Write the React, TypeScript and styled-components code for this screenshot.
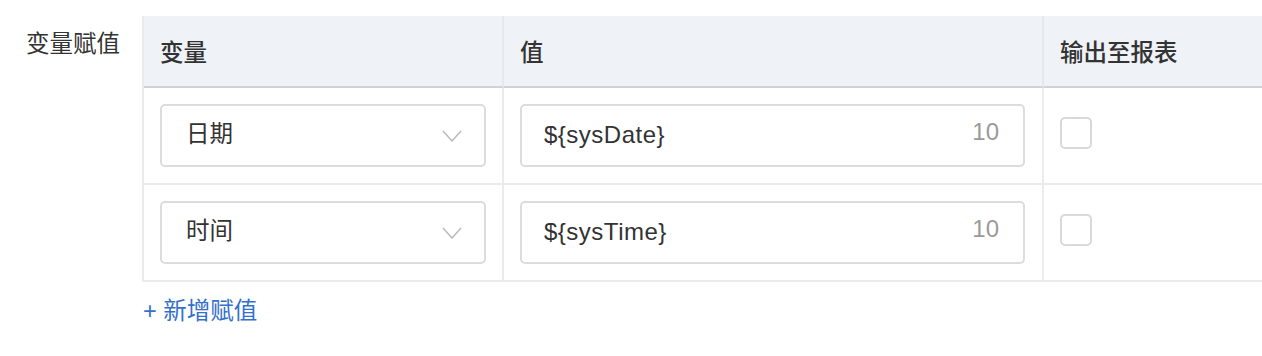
import React from "react";
import styled, { createGlobalStyle } from "styled-components";

const GlobalStyle = createGlobalStyle`
  html, body {
    margin: 0;
    background: #ffffff;
    overflow: hidden;
  }
  body {
    font-family: "Liberation Sans", "Noto Sans CJK SC", sans-serif;
    color: #333333;
  }
`;

type Row = { name: string; value: string; max: number };

const rows: Row[] = [
  { name: "日期", value: "${sysDate}", max: 10 },
  { name: "时间", value: "${sysTime}", max: 10 },
];

export default function App() {
  return (
    <>
      <GlobalStyle />
      <Page>
        <Label>变量赋值</Label>
        <Field>
          <Table>
            <HeadCell>变量</HeadCell>
            <HeadCell>值</HeadCell>
            <HeadCell $last>输出至报表</HeadCell>
            {rows.map((row) => (
              <React.Fragment key={row.name}>
                <Cell>
                  <Select>
                    <Text>{row.name}</Text>
                    <Chevron viewBox="0 0 20 12">
                      <path d="M1 1 L10 11 L19 1" />
                    </Chevron>
                  </Select>
                </Cell>
                <Cell>
                  <Input>
                    <Value>{row.value}</Value>
                    <Counter>{row.max}</Counter>
                  </Input>
                </Cell>
                <Cell $last>
                  <Checkbox />
                </Cell>
              </React.Fragment>
            ))}
          </Table>
          <AddLink>+ 新增赋值</AddLink>
        </Field>
      </Page>
    </>
  );
}

const Page = styled.div`
  display: flex;
  padding: 16px 0 0 26px;
`;

const Label = styled.div`
  width: 117px;
  flex-shrink: 0;
  padding-top: 13px;
  font-size: 23.5px;
  line-height: 30px;
  color: #333333;
`;

const Field = styled.div`
  display: flex;
  flex-direction: column;
  align-items: flex-start;
`;

const Table = styled.div`
  display: grid;
  grid-template-columns: 360px 540px 400px;
  border-left: 2px solid #ebebeb;
  margin-left: -1px;
`;

const HeadCell = styled.div<{ $last?: boolean }>`
  box-sizing: border-box;
  height: 72px;
  display: flex;
  align-items: center;
  padding: 0 16px;
  background: #eff2f6;
  border-bottom: 2px solid #cfd3d9;
  border-right: ${(p) => (p.$last ? "none" : "2px solid #e6e8eb")};
  font-size: 23.5px;
  font-weight: 500;
  color: #333333;
`;

const Cell = styled.div<{ $last?: boolean }>`
  box-sizing: border-box;
  height: 97px;
  display: flex;
  align-items: center;
  padding: 0 16px;
  border-bottom: 2px solid #ebebeb;
  border-right: ${(p) => (p.$last ? "none" : "2px solid #ebebeb")};
`;

const Box = styled.div`
  box-sizing: border-box;
  height: 63px;
  display: flex;
  align-items: center;
  justify-content: space-between;
  border: 2px solid #dcdcdc;
  border-radius: 5px;
  background: #ffffff;
  color: #333333;
`;

const Select = styled(Box)`
  width: 326px;
  padding: 0 22px 0 24px;
`;

const Text = styled.span`
  font-size: 23.5px;
  line-height: 30px;
  margin-top: -4px;
`;

const Input = styled(Box)`
  width: 505px;
  padding: 0 24px 0 22px;
`;

const Value = styled.span`
  font-size: 24px;
  letter-spacing: 0.5px;
  margin-top: -2px;
`;

const Counter = styled.span`
  color: #9a9a9a;
  font-size: 24px;
  margin-top: -8px;
`;

const Chevron = styled.svg`
  width: 20px;
  height: 12px;
  fill: none;
  stroke: #bdbdbd;
  stroke-width: 1.6;
`;

const Checkbox = styled.div`
  box-sizing: border-box;
  width: 32px;
  height: 32px;
  margin-top: -6px;
  border: 2px solid #d9d9d9;
  border-radius: 5px;
  background: #ffffff;
`;

const AddLink = styled.a`
  margin-top: 14px;
  font-size: 23.5px;
  line-height: 30px;
  color: #3370cc;
  cursor: pointer;
`;
